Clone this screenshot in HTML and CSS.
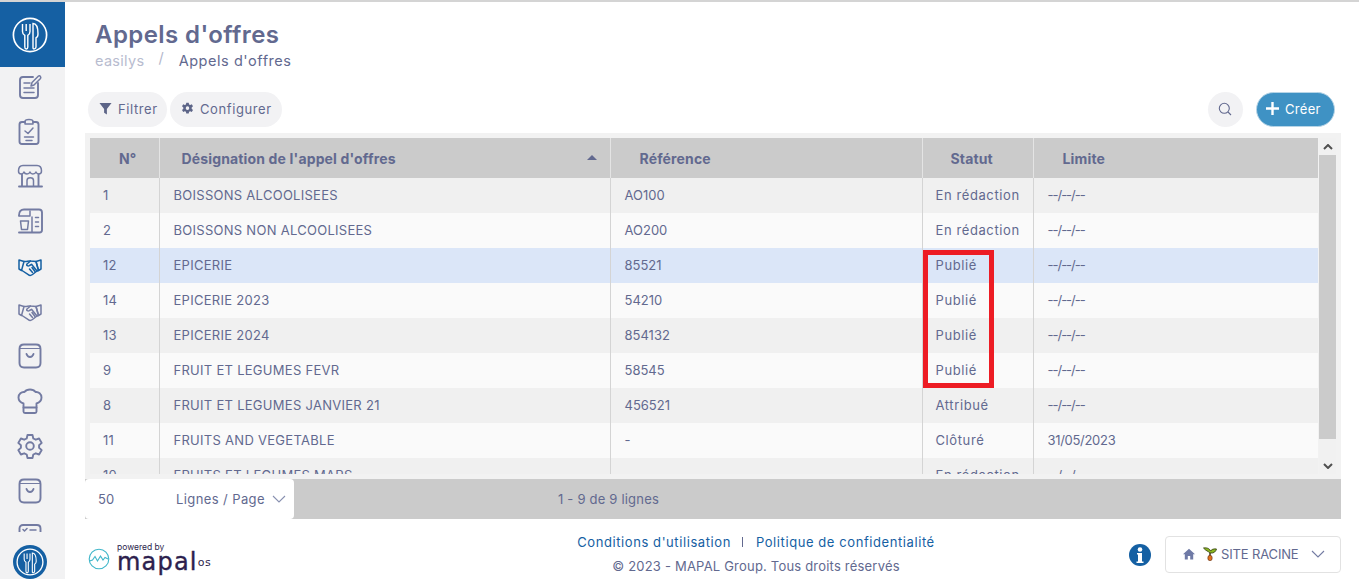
FILE: index.html
```html
<!DOCTYPE html>
<html lang="fr">
<head>
<meta charset="utf-8">
<title>Appels d'offres</title>
<link rel="stylesheet" href="styles.css">
</head>
<body>
<svg class="defs" width="0" height="0" aria-hidden="true">
  <symbol id="brand" viewBox="0 0 36 36">
    <circle cx="18" cy="18" r="16.6" fill="none" stroke="currentColor" stroke-width="1.7"/>
    <path d="M10.5 7v7.5c0 2.2 1.2 3.3 2.3 3.8V30c0 2.6 3 2.6 3 0V18.3c1.1-.5 2.2-1.6 2.2-3.8V7M14.2 7v7" fill="none" stroke="currentColor" stroke-width="1.4"/>
    <path d="M21 31V6.500c3.600 0 5 5 5 10.500 0 2.500-1.200 3.500-2 3.800V30c0 2-3 2.500-3 1z" fill="none" stroke="currentColor" stroke-width="1.4"/>
  </symbol>
  <symbol id="hands" viewBox="0 0 30 30">
    <g fill="none" stroke="currentColor" stroke-width="1.500" stroke-linejoin="round" stroke-linecap="round">
      <path d="M4 9l5 1.500-2.500 9L4 18zM26 9l-5 1.500 2.500 9 2.500-1.500z"/>
      <path d="M9 10.500c3 .5 4-1 6.500-.5l5.500.5 2.500 9-1.500.5-4.500 3.500c-1.500 1.200-3 1.200-4.200.2L7 19.500"/>
      <path d="M15.500 10l-3.500 3c-1 1.500 1 2.500 2.500 1.500l2-1.200 5.500 6.700M17 16.500l3 4M14.500 18l3 3.500"/>
    </g>
  </symbol>
  <symbol id="bag" viewBox="0 0 30 30">
    <g fill="none" stroke="currentColor" stroke-width="1.900" stroke-linecap="round">
      <path d="M9 3.500h12c3 0 4.500 1.500 4.500 4.500v14c0 3-1.500 4.500-4.500 4.500H9c-3 0-4.500-1.500-4.500-4.500V8c0-3 1.500-4.500 4.500-4.500z"/>
      <path d="M5 7.500h20" stroke-width="1"/>
      <path d="M11.500 13c.7 2 2 3 3.500 3s2.800-1 3.500-3"/>
    </g>
  </symbol>
  <symbol id="chev" viewBox="0 0 14 8">
    <path d="M1 1l6 6 6-6" fill="none" stroke="currentColor" stroke-width="1.100"/>
  </symbol>
</svg>

<div class="app">
  <aside class="sidebar">
    <div class="brand-block"><svg class="brand-logo"><use href="#brand"/></svg></div>
    <nav class="nav">
      <a class="nav-item"><svg class="ico" viewBox="0 0 30 30"><g fill="none" stroke="currentColor" stroke-width="1.900" stroke-linecap="round" stroke-linejoin="round"><path d="M18 6H8C6 6 5 7 5 9v15c0 2 1 3 3 3h12c2 0 3-1 3-3V12"/><path d="M9 12h6M9 17h10M9 21.500h10" stroke-width="1.500"/><path d="M16 15l1-3.500 6.500-6.500c1-1 3 1 2 2.500l-6.500 6.500z" stroke-width="1.500"/></g></svg></a>
      <a class="nav-item"><svg class="ico" viewBox="0 0 30 30"><g fill="none" stroke="currentColor" stroke-width="1.900" stroke-linecap="round" stroke-linejoin="round"><path d="M10 6H7C5.500 6 4.500 7 4.500 8.500v17C4.500 27 5.500 28 7 28h14c1.500 0 2.500-1 2.500-2.500v-17C23.500 7 22.500 6 21 6h-3"/><path d="M10 8V5.500C10 4.500 11 3.500 14 3.500s4 1 4 2V8z" stroke-width="1.500"/><path d="M10 15l3 2.500 5-5.500M9.500 21h9M11 24.500h6" stroke-width="1.500"/></g></svg></a>
      <a class="nav-item"><svg class="ico" viewBox="0 0 30 30"><g fill="none" stroke="currentColor" stroke-width="1.900" stroke-linecap="round" stroke-linejoin="round"><path d="M8 4.500h14c2.500 0 4.500 2 4.500 5.500 0 2-1.500 3-2.800 3s-2.200-.8-2.700-2c-.5 1.200-1.800 2-3.200 2s-2.300-.8-2.800-2c-.5 1.200-1.700 2-3 2s-2.600-.8-3-2c-.5 1.200-1.500 2-2.800 2S3.500 12 3.500 10C3.500 6.500 5.500 4.500 8 4.500z" stroke-width="1.500"/><path d="M7 13.500V25M23.500 13.500V25M4 25.500h23"/><path d="M12 25v-5.500c0-3.600 6.500-3.600 6.500 0V25" stroke-width="1.500"/></g></svg></a>
      <a class="nav-item"><svg class="ico" viewBox="0 0 30 30"><g fill="none" stroke="currentColor" stroke-width="1.900" stroke-linecap="round" stroke-linejoin="round"><path d="M4 9.500C4 5.500 6 3.500 9 3.500h15c2 0 3 1 3 3V24c0 1.500-1 2.500-2.500 2.500H4"/><path d="M4 10h11V5M5.500 15h8l-1 8.500h-6zM17 26V11" stroke-width="1.500"/><path d="M20.500 11.500h3M20.500 16h3M20.500 20.500h3" stroke-width="1.500"/></g></svg></a>
      <a class="nav-item nav-item-active"><svg class="ico"><use href="#hands"/></svg></a>
      <a class="nav-item"><svg class="ico"><use href="#hands"/></svg></a>
      <a class="nav-item"><svg class="ico"><use href="#bag"/></svg></a>
      <a class="nav-item"><svg class="ico" viewBox="0 0 30 30"><g fill="none" stroke="currentColor" stroke-width="1.900" stroke-linecap="round" stroke-linejoin="round"><path d="M8.500 25.500v-8C5.500 16.500 3.500 14 3.500 11.500c0-3.500 3-6 6-5.500C11 4 13 3.500 15 3.500s4 .5 5.500 2.500c3-.5 6 2 6 5.500 0 2.500-2 5-5 6v8c0 1-.5 1.500-1.500 1.500H10c-1 0-1.500-.5-1.500-1.500z"/><path d="M8.500 21.500h13"/></g></svg></a>
      <a class="nav-item"><svg class="ico" viewBox="0 0 30 30"><g fill="none" stroke="currentColor" stroke-width="1.900" stroke-linejoin="round"><path d="M12.500 4h5l.8 3.500 2.500 1.200 3.300-1.200 2.600 4.400-2.600 2.300v2.600l2.600 2.300-2.600 4.400-3.300-1.200-2.500 1.200-.8 3.500h-5l-.8-3.500-2.500-1.200-3.300 1.200-2.600-4.400 2.600-2.300v-2.600l-2.600-2.300 2.600-4.400 3.300 1.200 2.500-1.200z"/><circle cx="15" cy="15" r="3.800"/></g></svg></a>
      <a class="nav-item"><svg class="ico"><use href="#bag"/></svg></a>
      <a class="nav-item"><svg class="ico" viewBox="0 0 30 30"><g fill="none" stroke="currentColor" stroke-width="1.900" stroke-linecap="round" stroke-linejoin="round"><path d="M8 4h14c2 0 3.500 1.500 3.500 3.500v15c0 2-1.500 3.500-3.500 3.500H8c-2 0-3.500-1.500-3.500-3.500v-15C4.500 5.500 6 4 8 4z"/><path d="M8 8.500l1.500 1.500L12 7.500M15 9h6" stroke-width="1.500"/></g></svg></a>
    </nav>
    <div class="side-bottom"><span class="avatar"><svg class="avatar-logo"><use href="#brand"/></svg></span></div>
  </aside>

  <main class="main">
    <header class="page-head">
      <h1 class="title">Appels d'offres</h1>
      <div class="crumbs"><span class="crumb-root">easilys</span><span class="crumb-sep">/</span><span class="crumb-cur">Appels d'offres</span></div>
    </header>

    <div class="toolbar">
      <div class="tool-left">
        <button class="pill"><svg class="pill-ico" viewBox="0 0 14 14"><path d="M.5 1h13L8.500 7.500V13.500l-3-2V7.500z" fill="currentColor"/></svg>Filtrer</button>
        <button class="pill pill-cfg"><svg class="pill-ico" viewBox="0 0 14 14"><path fill="currentColor" fill-rule="evenodd" d="M5.700.8h2.600l.4 1.800 1.200.6 1.700-.7 1.300 2.200-1.400 1.200v1.400l1.400 1.200-1.300 2.200-1.700-.7-1.200.6-.4 1.800H5.700l-.4-1.800-1.200-.6-1.700.7L1.100 8.500l1.400-1.200V5.900L1.100 4.700l1.300-2.200 1.700.7 1.200-.6zM7 4.700a1.900 1.900 0 1 0 0 3.800 1.900 1.900 0 0 0 0-3.800z"/></svg>Configurer</button>
      </div>
      <div class="tool-right">
        <button class="round"><svg class="round-ico" viewBox="0 0 14 14"><circle cx="6.300" cy="6.300" r="5" fill="none" stroke="currentColor" stroke-width="1.100"/><path d="M10 10l3 3" stroke="currentColor" stroke-width="1.100"/></svg></button>
        <button class="create"><svg class="create-ico" viewBox="0 0 12 12"><path d="M6 0v12M0 6h12" stroke="currentColor" stroke-width="2.200"/></svg>Créer</button>
      </div>
    </div>

    <section class="panel">
      <div class="grid-zone">
        <div class="grid-main">
          <table class="grid">
            <colgroup><col class="c1"><col class="c2"><col class="c3"><col class="c4"><col class="c5"></colgroup>
            <thead>
              <tr>
                <th class="th-num">N°</th>
                <th class="th-des"><span>Désignation de l'appel d'offres</span><i class="sort"></i></th>
                <th class="th-ref">Référence</th>
                <th class="th-stat">Statut</th>
                <th class="th-lim">Limite</th>
              </tr>
            </thead>
            <tbody>
              <tr><td>1</td><td class="td-des">BOISSONS ALCOOLISEES</td><td class="td-ref">AO100</td><td class="td-stat">En rédaction</td><td class="td-none">--/--/--</td></tr>
              <tr><td>2</td><td class="td-des">BOISSONS NON ALCOOLISEES</td><td class="td-ref">AO200</td><td class="td-stat">En rédaction</td><td class="td-none">--/--/--</td></tr>
              <tr class="sel"><td>12</td><td class="td-des">EPICERIE</td><td class="td-ref">85521</td><td class="td-stat">Publié</td><td class="td-none">--/--/--</td></tr>
              <tr><td>14</td><td class="td-des">EPICERIE 2023</td><td class="td-ref">54210</td><td class="td-stat">Publié</td><td class="td-none">--/--/--</td></tr>
              <tr><td>13</td><td class="td-des">EPICERIE 2024</td><td class="td-ref">854132</td><td class="td-stat">Publié</td><td class="td-none">--/--/--</td></tr>
              <tr><td>9</td><td class="td-des">FRUIT ET LEGUMES FEVR</td><td class="td-ref">58545</td><td class="td-stat">Publié</td><td class="td-none">--/--/--</td></tr>
              <tr><td>8</td><td class="td-des">FRUIT ET LEGUMES JANVIER 21</td><td class="td-ref">456521</td><td class="td-stat">Attribué</td><td class="td-none">--/--/--</td></tr>
              <tr><td>11</td><td class="td-des">FRUITS AND VEGETABLE</td><td class="td-ref">-</td><td class="td-stat">Clôturé</td><td class="td-date">31/05/2023</td></tr>
              <tr><td>10</td><td class="td-des">FRUITS ET LEGUMES MARS</td><td class="td-ref">-</td><td class="td-stat">En rédaction</td><td class="td-none">--/--/--</td></tr>
            </tbody>
          </table>
        </div>
        <div class="scrollbar">
          <svg class="sb-arrow" viewBox="0 0 10 6"><path d="M1 5l4-4 4 4" fill="none" stroke="currentColor" stroke-width="2"/></svg>
          <div class="sb-track"><div class="sb-thumb"></div></div>
          <svg class="sb-arrow" viewBox="0 0 10 6"><path d="M1 1l4 4 4-4" fill="none" stroke="currentColor" stroke-width="2"/></svg>
        </div>
      </div>
      <div class="red-box"></div>
    </section>

    <div class="pager">
      <div class="page-size"><span class="ps-num">50</span><span class="ps-label">Lignes / Page</span><svg class="ps-chev"><use href="#chev"/></svg></div>
      <span class="page-info">1 - 9 de 9 lignes</span>
    </div>

    <footer class="foot">
      <div class="powered">
        <svg class="wave" viewBox="0 0 22 22"><circle cx="11" cy="11" r="9.800" fill="none" stroke="#3fb6c9" stroke-width="1.100"/><path d="M1.500 13l3-1 2.500-3.500 2.500 4.500 3-5 2.500 4 2-2.500 3 1.500" fill="none" stroke="#3fb6c9" stroke-width="1.100"/></svg>
        <div class="pw-text"><span class="pw-by">powered by</span><span class="pw-name">mapal<sup class="pw-os">os</sup></span></div>
      </div>
      <div class="legal">
        <div class="legal-links"><a>Conditions d'utilisation</a><span class="legal-sep"></span><a>Politique de confidentialité</a></div>
        <div class="legal-copy">© 2023 - MAPAL Group. Tous droits réservés</div>
      </div>
      <div class="foot-right">
        <svg class="info" viewBox="0 0 22 22"><circle cx="11" cy="11" r="11" fill="#1560a3"/><circle cx="11" cy="5.500" r="2.300" fill="#fff"/><path d="M8 9h5v8.500h1.500V19h-7v-1.500H9V10.500H8z" fill="#fff"/></svg>
        <div class="site">
          <svg class="site-home" viewBox="0 0 12 12"><path d="M6 .8L0 6.300h1.800V11.500h3V8h2.400v3.500h3V6.300H12z" fill="#6f7aa6"/></svg>
          <svg class="site-plant" viewBox="0 0 14 14"><path d="M7 6C5 4 3 4 .5 1c2.500-.5 6 0 7 3 1-1.500 3-2.500 6-2-.5 2.500-3 4.500-5.500 4z" fill="#8ab51f" stroke="#2f3a10" stroke-width=".8"/><path d="M7 6v3" stroke="#3b2c10" stroke-width="1.400"/><ellipse cx="7" cy="11" rx="2.200" ry="2.800" fill="#e2711d" stroke="#5a2c10" stroke-width=".6"/></svg>
          <span class="site-name">SITE RACINE</span>
          <svg class="site-chev"><use href="#chev"/></svg>
        </div>
      </div>
    </footer>
  </main>
</div>
</body>
</html>
```

FILE: styles.css
```css
* { box-sizing: border-box; }
html, body { margin: 0; height: 100%; overflow: hidden; }
body { font-family: "Inter", "Liberation Sans", sans-serif; color: #62698f; background: #fff; }
.defs { position: absolute; }
button { font: inherit; color: inherit; border: 0; cursor: pointer; }

.app { display: flex; height: 579px; border-top: 2px solid #d4d4d4; }

/* Sidebar */
.sidebar { width: 65px; flex: none; display: flex; flex-direction: column; background: #f2f2f3; }
.brand-block { height: 65px; flex: none; background: #1560a3; color: #fff; display: flex; align-items: center; justify-content: center; padding-right: 6px; }
.brand-logo { width: 36px; height: 36px; }
.nav { flex: 1; min-height: 0; overflow: hidden; display: flex; flex-direction: column; gap: 15px; padding-top: 4px; }
.nav-item { display: flex; height: 30px; flex: none; justify-content: center; color: #737ba2; padding-right: 5px; }
.nav-item-active { color: #1560a3; }
.ico { width: 30px; height: 30px; }
.side-bottom { height: 47px; flex: none; display: flex; justify-content: center; padding: 13px 5px 0 0; }
.avatar { width: 34px; height: 34px; border-radius: 50%; background: #1560a3; color: #fff; display: flex; align-items: center; justify-content: center; }
.avatar-logo { width: 28px; height: 28px; }

/* Main */
.main { flex: 1; min-width: 0; display: flex; flex-direction: column; }
.page-head { padding: 18px 0 0 30px; }
.title { margin: 0; font-size: 24px; line-height: 30px; font-weight: 600; color: #62698f; letter-spacing: .42px; }
.crumbs { display: flex; align-items: center; height: 20px; font-size: 14.5px; }
.crumb-root { color: #b8bccf; letter-spacing: .3px; }
.crumb-sep { color: #b4b8cc; margin: -6px 15px 0 14px; }
.crumb-cur { color: #62698f; letter-spacing: .55px; }

.toolbar { display: flex; justify-content: space-between; margin-top: 22px; padding: 0 24px 0 23px; height: 35px; }
.tool-left, .tool-right { display: flex; }
.tool-left { gap: 3px; }
.tool-right { gap: 13px; }
.pill { height: 35px; width: 79px; border-radius: 18px; background: #f2f2f4; font-size: 13px; display: flex; align-items: center; padding: 0 0 2px 11px; gap: 6px; letter-spacing: .6px; }
.pill-cfg { width: 112px; gap: 6px; }
.pill-ico { width: 13px; height: 13px; flex: none; color: #5d6588; }
.round { width: 35px; height: 35px; border-radius: 50%; background: #f2f2f4; display: flex; align-items: center; justify-content: center; padding: 0 1px 1px 0; }
.round-ico { width: 14px; height: 14px; }
.create { width: 79px; height: 35px; border-radius: 18px; background: #3f92c4; border: 1px solid #b7d5e7; color: #fff; font-size: 13px; letter-spacing: .3px; display: flex; align-items: center; padding: 0 0 2px 9px; gap: 6px; }
.create-ico { width: 13px; height: 13px; flex: none; }

/* Table panel */
.panel { position: relative; margin: 6px 18px 0 20px; height: 346px; flex: none; background: #f2f2f2; padding: 5px; }
.grid-zone { display: flex; height: 336px; }
.grid-main { width: 1228px; flex: none; height: 336px; overflow: hidden; }
.grid { width: 1228px; border-collapse: collapse; table-layout: fixed; font-size: 13px; }
.c1 { width: 69px; }
.c2 { width: 451px; }
.c3 { width: 312px; }
.c4 { width: 111px; }
.c5 { width: 285px; }
.grid th { height: 40px; padding: 0; background: #cbcbcb; color: #62698f; font-weight: 700; font-size: 14px; letter-spacing: .15px; text-align: left; border-right: 1px solid #e4e4e4; }
.grid th:last-child, .grid td:last-child { border-right: 0; }
.grid .th-num { padding-left: 29px; }
.grid .th-des { padding: 0 24px 0 22px; }
.th-des { position: relative; }
.grid .th-ref, .grid .th-lim { padding-left: 29px; }
.grid .th-stat { padding-left: 28px; }
.sort { position: absolute; right: 13px; top: 17px; width: 0; height: 0; border: 5px solid transparent; border-top: 0; border-bottom: 5px solid #62698f; }
.grid td { height: 35px; padding: 0 0 2px 13px; background: #fafafa; border-right: 1px solid #d4d4d4; white-space: nowrap; overflow: hidden; letter-spacing: .28px; }
.grid tbody tr:nth-child(odd) td { background: #f0f0f0; }
.grid tbody tr.sel td { background: #dbe6f8; }
.grid td.td-des { padding-left: 14px; }
.grid td.td-ref { padding-left: 14px; letter-spacing: 0; }
.grid td.td-stat { letter-spacing: .6px; }
.grid td.td-none { padding-left: 14px; letter-spacing: -1px; }
.grid td.td-date { padding-left: 14px; letter-spacing: -.3px; }

.scrollbar { width: 17px; margin-left: 1px; height: 336px; background: #f1f1f1; display: flex; flex-direction: column; color: #505050; }
.sb-arrow { width: 10px; height: 6px; flex: none; margin: 6px auto 5px; }
.sb-track { flex: 1; min-height: 0; }
.sb-thumb { height: 284px; background: #cbcbcb; }

.red-box { position: absolute; left: 838px; top: 117px; width: 71px; height: 138px; border: 5px solid #ed1c24; }

/* Pager */
.pager { margin: 0 18px 0 20px; height: 40px; flex: none; background: #cbcbcb; display: flex; align-items: center; font-size: 13px; }
.page-size { width: 209px; height: 40px; background: #fff; border-radius: 4px; display: flex; align-items: center; padding-left: 13px; }
.ps-num { width: 78px; }
.ps-label { letter-spacing: .4px; }
.ps-chev { width: 14px; height: 8px; margin-left: 7px; color: #8890b0; }
.page-info { margin-left: 264px; letter-spacing: .2px; }

/* Footer */
.foot { flex: 1; display: grid; grid-template-columns: 300px 736px 217px; padding-left: 23px; }
.powered { display: flex; align-items: flex-start; padding: 29px 0 0 0; }
.wave { width: 22px; height: 22px; flex: none; }
.pw-text { display: flex; flex-direction: column; margin: -6px 0 0 7px; color: #2d1f4e; }
.pw-by { font-size: 8.5px; line-height: 10px; }
.pw-name { font-family: "DejaVu Sans", sans-serif; font-size: 24px; line-height: 20px; letter-spacing: 1.2px; -webkit-text-stroke: .4px #2d1f4e; white-space: nowrap; }
.pw-os { font-size: 11px; -webkit-text-stroke: 0; letter-spacing: .5px; vertical-align: 4px; line-height: 0; }
.legal { display: flex; flex-direction: column; align-items: center; padding-top: 15px; font-size: 13px; }
.legal-links { display: flex; align-items: center; color: #1560a3; height: 16px; letter-spacing: .58px; }
.legal-sep { width: 1px; height: 10px; background: #62698f; margin: 0 13px 0 11px; }
.legal-copy { margin-top: 8px; line-height: 16px; color: #62698f; letter-spacing: .2px; }
.foot-right { display: flex; align-items: flex-start; justify-content: space-between; padding: 17px 0 0 5px; }
.info { width: 22px; height: 22px; margin-top: 8px; flex: none; }
.site { width: 176px; height: 37px; border: 1px solid #e2e2e2; border-radius: 4px; display: flex; align-items: center; padding: 0 0 2px 17px; font-size: 13px; }
.site-home { width: 12px; height: 12px; flex: none; }
.site-plant { width: 14px; height: 14px; margin-left: 8px; flex: none; }
.site-name { margin-left: 4px; width: 90px; flex: none; letter-spacing: -.15px; }
.site-chev { width: 14px; height: 8px; flex: none; color: #737ba2; }
```
